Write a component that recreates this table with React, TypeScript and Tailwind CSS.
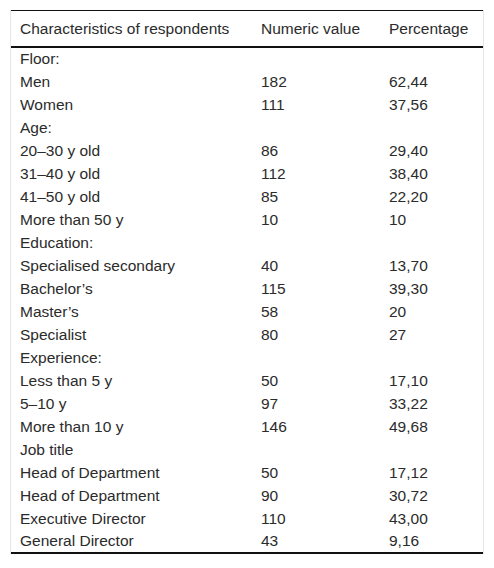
import React from "react";

const rows: [string, string, string][] = [
  ["Floor:", "", ""],
  ["Men", "182", "62,44"],
  ["Women", "111", "37,56"],
  ["Age:", "", ""],
  ["20–30 y old", "86", "29,40"],
  ["31–40 y old", "112", "38,40"],
  ["41–50 y old", "85", "22,20"],
  ["More than 50 y", "10", "10"],
  ["Education:", "", ""],
  ["Specialised secondary", "40", "13,70"],
  ["Bachelor’s", "115", "39,30"],
  ["Master’s", "58", "20"],
  ["Specialist", "80", "27"],
  ["Experience:", "", ""],
  ["Less than 5 y", "50", "17,10"],
  ["5–10 y", "97", "33,22"],
  ["More than 10 y", "146", "49,68"],
  ["Job title", "", ""],
  ["Head of Department", "50", "17,12"],
  ["Head of Department", "90", "30,72"],
  ["Executive Director", "110", "43,00"],
  ["General Director", "43", "9,16"],
];

export default function App() {
  return (
    <div className="bg-white w-[494px] h-[568px] pt-[10px] pl-[10px] text-[15.5px] text-[#2b2b2b] font-['Liberation_Sans',Arial,sans-serif]">
      <div className="w-[474px] border-x border-[#e6e6e6]">
        <table className="w-[472px] border-collapse table-fixed">
          <colgroup>
            <col className="w-[241px]" />
            <col className="w-[128px]" />
            <col className="w-[103px]" />
          </colgroup>
          <thead>
            <tr className="border-t border-b-2 border-[#111111]">
              <th className="text-left font-normal pl-[9px] h-[36px] leading-[17px]">Characteristics of respondents</th>
              <th className="text-left font-normal pl-[9px] leading-[17px]">Numeric value</th>
              <th className="text-left font-normal pl-[9px] leading-[17px]">Percentage</th>
            </tr>
          </thead>
          <tbody className="border-b-2 border-[#111111]">
            {rows.map((r, i) => (
              <tr key={i} className="h-[23px]">
                <td className="pl-[9px] leading-[17px] p-0">{r[0]}</td>
                <td className="pl-[9px] leading-[17px] p-0">{r[1]}</td>
                <td className="pl-[9px] leading-[17px] p-0">{r[2]}</td>
              </tr>
            ))}
          </tbody>
        </table>
      </div>
    </div>
  );
}
